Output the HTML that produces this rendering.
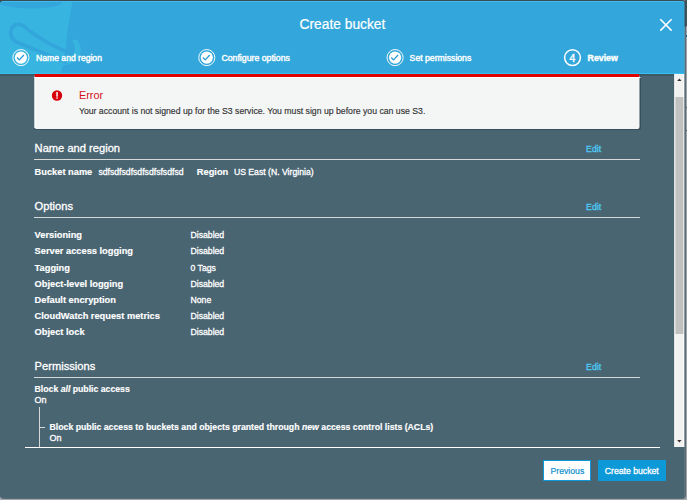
<!DOCTYPE html>
<html><head><meta charset="utf-8">
<style>
*{box-sizing:border-box;margin:0;padding:0}
html,body{width:687px;height:500px;overflow:hidden;background:#9da6ab;font-family:"Liberation Sans",Arial,sans-serif;}
.abs{position:absolute;white-space:nowrap}
#shadow{position:absolute;left:0;top:0;width:685.5px;height:499.4px;background:linear-gradient(#3c4c55,#3c4c55) 0 0/100% 27px no-repeat,#5b6b75;border-radius:0 4px 4px 4px}
#modal{position:absolute;left:0;top:1px;width:685px;height:497px;background:#4a6572;border-radius:3px;overflow:hidden}
#hdr{position:absolute;left:0;top:0;width:685px;height:73px;background:#33a7db;overflow:hidden;border-top:1px solid #3dbcf0;border-right:1px solid #3dbcf0;border-bottom:1px solid #35c0f0;border-radius:3px 3px 0 0}
#title{position:absolute;left:299.6px;top:13px;color:#fff;font-size:13.77px;line-height:20px;white-space:nowrap}
.step{position:absolute;top:50px;color:#fff;line-height:13px;white-space:nowrap}
.h{position:absolute;left:34.6px;color:#fff;font-size:11.15px;line-height:15px;white-space:nowrap}
.edit{position:absolute;left:586.1px;color:#4ccaf7;font-size:8.76px;line-height:13px}
.hr{position:absolute;left:34px;width:606px;height:1px;background:#d6d9d8}
.v,.h{-webkit-text-stroke:0.3px #fff}
.k,.kb{-webkit-text-stroke:0.15px #fff}
#title{-webkit-text-stroke:0.2px #fff}
.edit{-webkit-text-stroke:0.3px #4ccaf7}
.step{-webkit-text-stroke:0.4px #fff}
.k{position:absolute;left:34.6px;color:#fff;font-size:9.28px;font-weight:bold;line-height:13px;white-space:nowrap}
.kb{position:absolute;left:34.6px;color:#fff;font-size:8.7px;font-weight:bold;line-height:13px;white-space:nowrap}
.v{position:absolute;left:190.5px;color:#fff;font-size:8.67px;line-height:13px;white-space:nowrap}
</style></head><body>
<div class="abs" style="left:685px;top:0;width:2px;height:26px;background:#44555f"></div>
<div class="abs" style="left:685px;top:107px;width:2px;height:1px;background:#4a5358"></div>
<div class="abs" style="left:685px;top:130px;width:2px;height:1px;background:#4a5358"></div>
<div class="abs" style="left:685px;top:35px;width:2px;height:2px;background:#1f5f9a"></div>
<div id="shadow"></div>
<div id="modal">
 <div id="hdr">
  <svg class="abs" style="left:0;top:-2px" width="120" height="75" viewBox="0 0 120 75">
   <path d="M-5,-5 L73,-5 L72.5,1 L67.5,30 L65.5,50 Q63.5,64 60.5,73 L-5,73 Z" fill="#38b4e0"/>
   <ellipse cx="31" cy="1.5" rx="32" ry="7" fill="#33a7db"/>
   <g transform="translate(0,0.3)">
   <path d="M75.2,42.6 Q78,46.3 77.5,51.3 Q76,59.3 62,62.3" fill="none" stroke="#38b4e0" stroke-width="6.4" stroke-linecap="round"/>
   <path d="M71.5,42.9 Q73.2,44.8 73,49 Q72.5,55.5 67,51.9 Q37.3,38.3 24,26 C18,21.5 9,25 11,35 C11.8,39 14,40.5 18,42.3 L65,61.5" fill="none" stroke="#32a6da" stroke-width="3.6" stroke-linecap="round"/>
   </g>
  </svg>
  <div id="title">Create bucket</div>
  <svg class="abs" style="left:659px;top:16.4px" width="14" height="14" viewBox="0 0 14 14"><path d="M1.3,1.3 L12.6,12.6 M12.6,1.3 L1.3,12.6" stroke="#fff" stroke-width="1.5" fill="none"/></svg>

  <svg class="abs" style="left:12px;top:46px" width="19" height="20" viewBox="0 0 19 20"><circle cx="8.9" cy="9.6" r="8.05" fill="none" stroke="#fff" stroke-width="0.95"/><circle cx="8.9" cy="9.6" r="6.05" fill="#fff"/><path d="M5.0,9.5 L7.3,11.9 L11.9,7.0" fill="none" stroke="#2a9bd6" stroke-width="1.3"/></svg>
  <div class="step" style="left:36.1px;font-size:8.58px">Name and region</div>
  <svg class="abs" style="left:197px;top:46px" width="19" height="20" viewBox="0 0 19 20"><circle cx="9.8" cy="9.6" r="8.05" fill="none" stroke="#fff" stroke-width="0.95"/><circle cx="9.8" cy="9.6" r="6.05" fill="#fff"/><path d="M5.9,9.5 L8.2,11.9 L12.8,7.0" fill="none" stroke="#2a9bd6" stroke-width="1.3"/></svg>
  <div class="step" style="left:221.4px;font-size:8.74px">Configure options</div>
  <svg class="abs" style="left:386px;top:46px" width="19" height="20" viewBox="0 0 19 20"><circle cx="9.1" cy="9.6" r="8.05" fill="none" stroke="#fff" stroke-width="0.95"/><circle cx="9.1" cy="9.6" r="6.05" fill="#fff"/><path d="M5.2,9.5 L7.5,11.9 L12.1,7.0" fill="none" stroke="#2a9bd6" stroke-width="1.3"/></svg>
  <div class="step" style="left:409.6px;font-size:8.69px">Set permissions</div>
  <svg class="abs" style="left:563px;top:46px" width="19" height="20" viewBox="0 0 19 20"><circle cx="9.5" cy="9.6" r="7.9" fill="none" stroke="#fff" stroke-width="1.5"/><text x="9.35" y="13.9" text-anchor="middle" font-family="Liberation Sans, sans-serif" font-size="10.5" fill="#fff" stroke="#fff" stroke-width="0.4">4</text></svg>
  <div class="step" style="left:587.6px;font-size:8.76px;font-weight:bold">Review</div>
 </div>

 <div class="abs" style="left:0;top:73px;width:674px;height:1.5px;background:rgba(30,45,60,.22)"></div>
 <!-- error box -->
 <div class="abs" style="left:33.5px;top:73px;width:607px;height:56.3px;background:#36505d;border-radius:0 0 2px 2px"></div>
 <div class="abs" style="left:35px;top:73px;width:605px;height:55px;transform:translateX(-0.5px);background:#f4f6f6;border-top:3px solid #e00000;border-radius:0 0 2px 2px;">
  <div class="abs" style="left:0;top:0;width:605.5px;height:1px;background:#fff"></div>
  <div class="abs" style="left:0;top:0;width:1px;height:51px;background:#fff"></div>
  <svg class="abs" style="left:17.3px;top:12.8px" width="11" height="11" viewBox="0 0 11 11"><circle cx="5.5" cy="5.5" r="5.2" fill="#d8000c"/><rect x="4.8" y="2.1" width="1.5" height="4.6" rx=".4" fill="#fff"/><rect x="4.8" y="7.3" width="1.5" height="1.5" rx=".5" fill="#fff"/></svg>
  <div class="abs" style="left:44.4px;top:10.7px;font-size:10.9px;line-height:15px;color:#d6101a">Error</div>
  <div class="abs" style="left:44.4px;top:28px;font-size:8.7px;line-height:13px;color:#333;-webkit-text-stroke:0.15px #333">Your account is not signed up for the S3 service. You must sign up before you can use S3.</div>
 </div>

 <div class="abs" id="content" style="left:0;top:1px;width:684px;height:0">
 <div class="h" style="top:139px">Name and region</div><div class="edit" style="top:141px">Edit</div>
 <div class="hr" style="top:157px"></div>
 <div class="k" style="top:164px">Bucket name</div><div class="v" style="top:164px;left:98.4px">sdfsdfsdfsdfsdfsfsdfsd</div>
 <div class="k" style="top:164px;left:196.8px">Region</div><div class="v" style="top:164px;left:233.9px">US East (N. Virginia)</div>

 <div class="h" style="top:197px">Options</div><div class="edit" style="top:199px">Edit</div>
 <div class="hr" style="top:215.2px"></div>
 <div class="k" style="top:227px">Versioning</div><div class="v" style="top:227px">Disabled</div>
 <div class="k" style="top:243px">Server access logging</div><div class="v" style="top:243px">Disabled</div>
 <div class="k" style="top:260px">Tagging</div><div class="v" style="top:260px">0 Tags</div>
 <div class="k" style="top:276px">Object-level logging</div><div class="v" style="top:276px">Disabled</div>
 <div class="k" style="top:292px">Default encryption</div><div class="v" style="top:292px">None</div>
 <div class="k" style="top:308px">CloudWatch request metrics</div><div class="v" style="top:308px">Disabled</div>
 <div class="k" style="top:324px">Object lock</div><div class="v" style="top:324px">Disabled</div>

 <div class="h" style="top:357px">Permissions</div><div class="edit" style="top:359px">Edit</div>
 <div class="hr" style="top:375px"></div>
 <div class="kb" style="top:381px">Block <i>all</i> public access</div>
 <div class="v" style="top:392px;left:34.4px;font-size:9px">On</div>
 <div class="abs" style="left:38.8px;top:404.5px;width:1.3px;height:41px;background:#d6d9d8"></div>
 <div class="abs" style="left:39px;top:425px;width:6px;height:1px;background:#d6d9d8"></div>
 <div class="kb" style="top:419px;left:49.5px;font-size:8.735px">Block public access to buckets and objects granted through <i>new</i> access control lists (ACLs)</div>
 <div class="v" style="top:430px;left:49.5px;font-size:9px">On</div>

 </div>
 <!-- scrollbar -->
 <div class="abs" style="left:674px;top:73px;width:10px;height:373px;transform:translateX(0.4px)">
  <div class="abs" style="left:0;top:0;width:10px;height:373px;background:#f1f1f1;border-left:1px solid #fff;border-right:1px solid #fff"></div>
  <div class="abs" style="left:1.1px;top:23.1px;width:7.8px;height:236.7px;background:#c1c1c1"></div>
  <svg class="abs" style="left:0;top:0" width="10" height="373" viewBox="0 0 10 373"><path d="M2.8,7.1 L5,4.6 L7.2,7.1 Z" fill="#3a2c2c"/><path d="M2.8,366 L5,368.5 L7.2,366 Z" fill="#3a2c2c"/></svg>
 </div>

 <!-- footer -->
 <div class="abs" style="left:24.8px;top:445.9px;width:635.5px;height:1.5px;background:#fff"></div>
 <div class="abs" style="left:543.3px;top:459.3px;width:48.2px;height:20.6px;background:#fff;border:1px solid #0d98d8;color:#0d8fd0;font-size:8.69px;line-height:20px;-webkit-text-stroke:0.2px #0d8fd0;text-align:center">Previous</div>
 <div class="abs" style="left:597.6px;top:459.3px;width:68.4px;height:20.6px;background:#0d98d8;color:#fff;font-size:8.69px;line-height:22px;-webkit-text-stroke:0.3px #fff;text-align:center">Create bucket</div>
 <div class="abs" style="left:684px;top:0;width:1px;height:26px;background:rgba(60,76,85,.55)"></div>
 <div class="abs" style="left:684px;top:26px;width:1px;height:471px;background:rgba(110,124,132,.55)"></div>
</div>
</body></html>
